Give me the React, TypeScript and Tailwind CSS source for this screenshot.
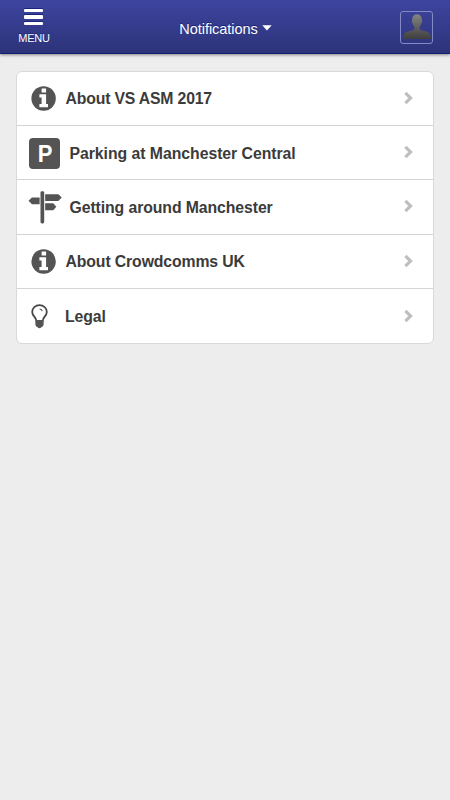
import React from "react";

const INK = "#545454";

function InfoIcon() {
  return (
    <svg width="25" height="25" viewBox="0 0 25 25" className="block">
      <circle cx="12.6" cy="12.5" r="12.2" fill={INK} />
      <path
        d="M10.6 2.5h4.5v4.1h-4.5z M8.4 8.3h6.7v9.8h1.9v3.2H8.4v-3.2h2.2v-6.6H8.4z"
        fill="#fff"
      />
    </svg>
  );
}

function ParkingIcon() {
  return (
    <span className="flex h-[31px] w-[31px] items-center justify-center rounded-[4px] bg-[#545454] pl-[2px] text-[24.5px] leading-[31px] font-bold text-white">
      <span className="inline-block scale-x-90">P</span>
    </span>
  );
}

function SignpostIcon() {
  return (
    <svg width="34" height="33" viewBox="0 0 34 33" className="block" fill={INK}>
      <rect x="12.5" y="0.2" width="3.7" height="32.2" rx="1.4" />
      <path d="M4 6.4h7.6v6.8H4L0.5 9.8z" />
      <path d="M17.2 3.2h13.2l3.3 3.4-3.3 3.5H17.2z" />
      <path d="M17.2 12.3h8.1l3 3.4-3 3.5h-8.1z" />
    </svg>
  );
}

function BulbIcon() {
  return (
    <svg width="17" height="25" viewBox="0 0 17 25" className="block">
      <path
        d="M5.1 16.2C5 13.2 1.2 11.8 1.2 7.9 1.2 3.9 4.5 1.2 8.5 1.2s7.3 2.7 7.3 6.7c0 3.9-3.8 5.3-3.9 8.3"
        fill="none"
        stroke="#484848"
        strokeWidth="1.8"
      />
      <path d="M4.2 16h8.6l-.3 5.2c-.8 1.3-1.4 1.7-2.2 2.1-.7 1.4-2.9 1.4-3.6 0-.8-.4-1.5-.8-2.2-2.1z" fill={INK} />
      <path d="M8.6 5c1.5.1 2.4.8 2.7 2.1" fill="none" stroke="#484848" strokeWidth="1.1" />
    </svg>
  );
}

function Chevron() {
  return (
    <svg width="10" height="14" viewBox="0 0 10 14" className="mb-px block" fill="none" stroke="#bfbfbf" strokeWidth="3.2">
      <path d="M1.4 1.8 6.6 7 1.4 12.2" />
    </svg>
  );
}

function Row({
  icon,
  label,
  iconClass,
  textClass,
}: {
  icon: React.ReactNode;
  label: string;
  iconClass: string;
  textClass: string;
}) {
  return (
    <li className="flex h-[54.4px] items-center border-b border-[#d4d4d4] pr-[19px] last:border-b-0">
      <span className={"shrink-0 " + iconClass}>{icon}</span>
      <span className={"flex-1 whitespace-nowrap pt-[2px] text-[15.8px] leading-5 font-bold text-[#3b3b3b] " + textClass}>
        {label}
      </span>
      <Chevron />
    </li>
  );
}

export default function App() {
  return (
    <div className="min-h-screen w-full bg-[#ededed] font-['Liberation_Sans',Arial,sans-serif]">
      <header className="flex h-[54px] border-b border-[#14206f] bg-linear-to-b from-[#3d459f] to-[#2d3379] text-white shadow-[0_1px_3px_rgba(0,0,0,0.45)]">
        <div className="flex w-[67px] flex-col items-center pt-[9px]">
          <span className="flex flex-col gap-[3px]">
            <i className="block h-[3.3px] w-[19px] rounded-[1px] bg-white shadow-[0_-1px_0_#172479]" />
            <i className="block h-[3.3px] w-[19px] rounded-[1px] bg-white shadow-[0_-1px_0_#172479]" />
            <i className="block h-[3.3px] w-[19px] rounded-[1px] bg-white shadow-[0_-1px_0_#172479]" />
          </span>
          <span className="mt-[6px] pl-px text-[11px] leading-[14px] tracking-[-0.2px] [text-shadow:0_-1px_0_#172479]">MENU</span>
        </div>
        <div className="flex flex-1 items-center justify-center gap-[4px] pt-[4px] pl-px">
          <span className="text-[14.5px] leading-5 tracking-[-0.05px] [text-shadow:0_-1px_0_#172479]">Notifications</span>
          <svg width="10" height="6" viewBox="0 0 10 6" className="mb-[2px] block">
            <path d="M0.3 0.2h9.4L5 5.6z" fill="#fff" />
          </svg>
        </div>
        <div className="w-[67px] pt-[11px] pl-[17px]">
          <div className="flex h-[33px] w-[33px] items-end justify-center rounded-[3px] border border-[#848ac7] pb-[4px]">
            <svg width="28" height="25" viewBox="0 0 28 25" className="block">
              <defs>
                <linearGradient id="person" x1="0" y1="0" x2="0" y2="1">
                  <stop offset="0" stopColor="#858585" />
                  <stop offset="1" stopColor="#3f3f3f" />
                </linearGradient>
              </defs>
              <path
                d="M14 0.2c3 0 4.8 2 4.8 5.2 0 1 .5 1.1.4 2.2-.1 1-.7 1.6-1 2.2-.4 1.5-1 2.4-1.5 3v2.4c1.6 1.4 5.9 1.8 8.4 3 2.1 1.1 2.8 3.4 2.8 6.8H.1c0-3.4.7-5.7 2.8-6.8 2.5-1.2 6.8-1.6 8.4-3v-2.4c-.5-.6-1.1-1.5-1.5-3-.3-.6-.9-1.2-1-2.2-.1-1.1.4-1.2.4-2.2C9.2 2.2 11 .2 14 .2z"
                fill="url(#person)"
              />
            </svg>
          </div>
        </div>
      </header>
      <main className="px-[16px] pt-[16.5px]">
        <ul className="w-[418px] rounded-[6px] border border-[#d9d9d9] bg-white">
          <Row icon={<InfoIcon />} label="About VS ASM 2017" iconClass="ml-[14px]" textClass="ml-[9.5px] tracking-[-0.18px]" />
          <Row icon={<ParkingIcon />} label="Parking at Manchester Central" iconClass="ml-[12px] pt-[2px]" textClass="ml-[9.5px] tracking-[-0.04px]" />
          <Row icon={<SignpostIcon />} label="Getting around Manchester" iconClass="ml-[11px] pt-[2px]" textClass="ml-[7.5px] tracking-[-0.09px]" />
          <Row icon={<InfoIcon />} label="About Crowdcomms UK" iconClass="ml-[14px]" textClass="ml-[9.5px] tracking-[-0.12px]" />
          <Row icon={<BulbIcon />} label="Legal" iconClass="ml-[14px]" textClass="ml-[17px] tracking-[-0.1px]" />
        </ul>
      </main>
    </div>
  );
}
